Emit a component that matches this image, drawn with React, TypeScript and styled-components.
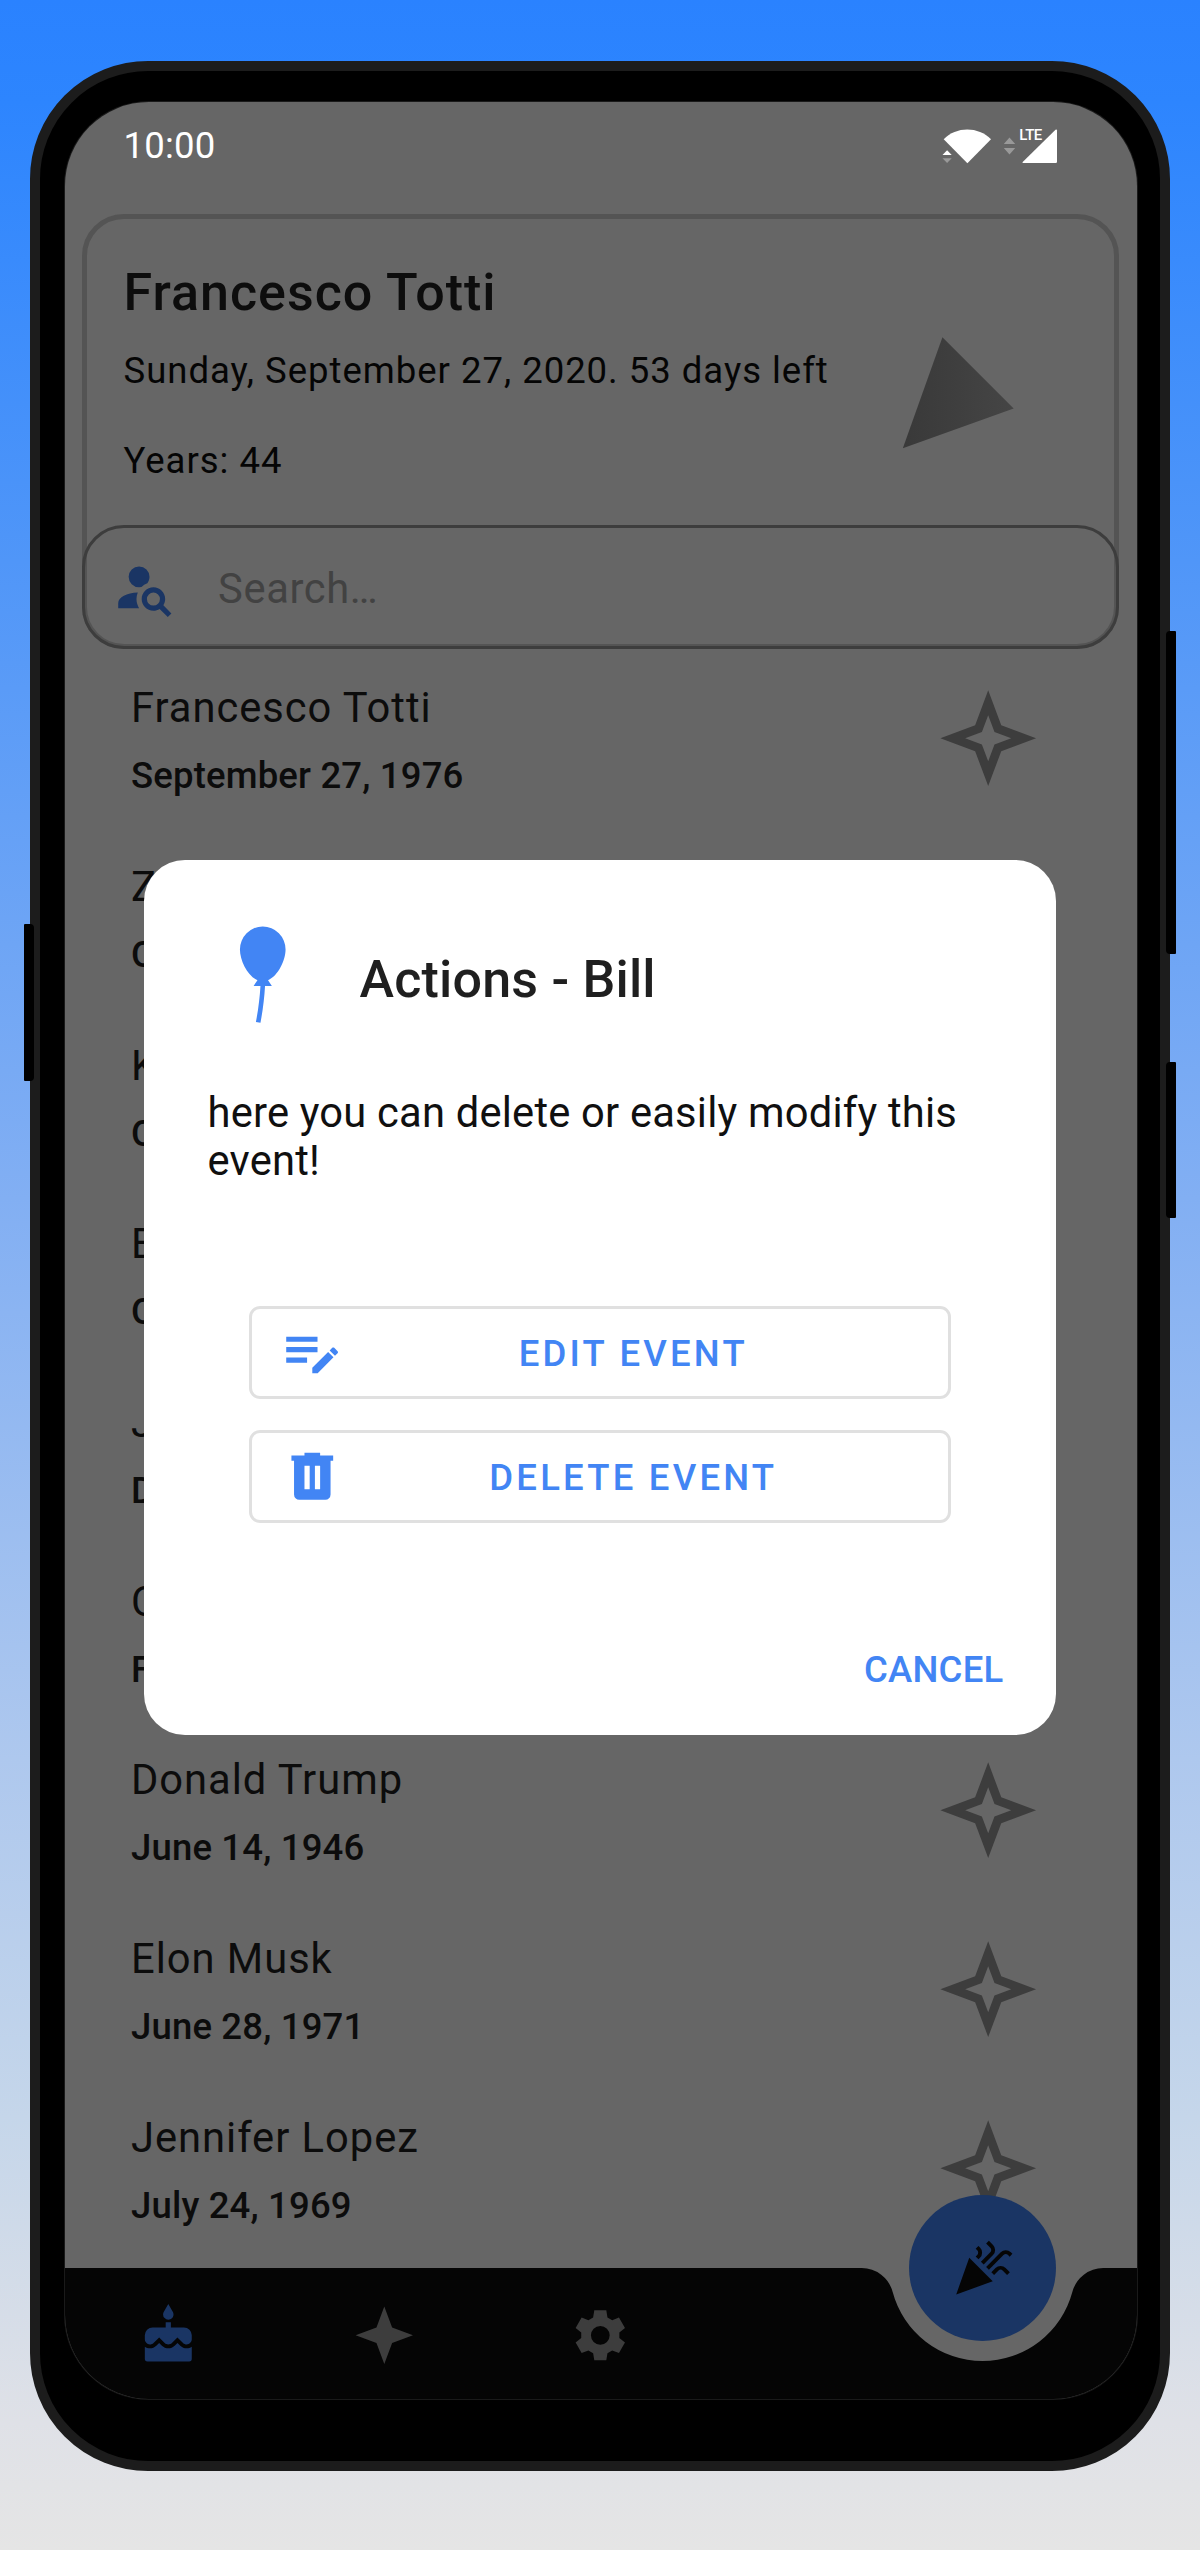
import React from "react";
import styled, { createGlobalStyle } from "styled-components";
import { MdCelebration } from "react-icons/md";

const GlobalStyle = createGlobalStyle`
  * { box-sizing: border-box; }
  body { margin: 0; }
`;

const Page = styled.main`
  width: 1200px;
  height: 2550px;
  padding: 61px 30px 0;
  overflow: hidden;
  font-family: Roboto, "Liberation Sans", sans-serif;
  background: linear-gradient(
    180deg,
    #2a82ff 0%,
    #2d85fe 4%,
    #5096f8 22%,
    #82aff3 47%,
    #aec8ee 69%,
    #c5d6ea 83%,
    #dfe1e7 95%,
    #e5e5e5 100%
  );
`;

const Phone = styled.div`
  position: relative;
  width: 1140px;
  height: 2410px;
  padding: 31px 22px 62px 25px;
  border: 10px solid #1c1c1c;
  border-radius: 118px;
  background: #000;
`;

const SideKey = styled.span<{ $side: "left" | "right"; $top: number; $length: number }>`
  position: absolute;
  top: ${(p) => p.$top}px;
  ${(p) => p.$side}: -16px;
  width: 10px;
  height: ${(p) => p.$length}px;
  border-radius: ${(p) => (p.$side === "left" ? "1px 4px 4px 1px" : "4px 1px 1px 4px")};
  background: #000;
`;

const Screen = styled.div`
  position: relative;
  display: flex;
  flex-direction: column;
  width: 1072px;
  height: 2297px;
  border-radius: 84px;
  overflow: hidden;
  background: #666;
  box-shadow: 0 0 0 1px #1a1a1a;
`;

const StatusBar = styled.header`
  display: flex;
  justify-content: space-between;
  flex: none;
  height: 112px;
  padding: 22px 77px 0 58.5px;

  svg { margin-top: -1px; }
`;

const Clock = styled.span`
  font-size: 36.5px;
  line-height: 44px;
  letter-spacing: 0.2px;
  color: #fff;
`;

const HeroCard = styled.section`
  flex: none;
  height: 435px;
  margin: 0 18px 0 16.5px;
  border: 5px solid #545454;
  border-radius: 42px;
`;

const HeroBody = styled.div`
  display: flex;
  justify-content: space-between;
  height: 306px;
  padding: 44px 37px 0 37px;
`;

const HeroTitle = styled.h1`
  margin: 0 0 26px;
  font-size: 52px;
  line-height: 60px;
  font-weight: 500;
  letter-spacing: 1px;
  color: #0d0d0d;
`;

const HeroLine = styled.p`
  margin: 0 0 46px;
  font-size: 36.5px;
  line-height: 44px;
  letter-spacing: 0.98px;
  white-space: nowrap;
  color: #050505;
`;

const HeroArt = styled.svg`
  flex: none;
  width: 190px;
  height: 190px;
  margin-top: 11px;
`;

const SearchField = styled.div`
  display: flex;
  align-items: center;
  gap: 42.5px;
  height: 124px;
  margin: 0 -5px;
  padding-left: 28.5px;
  border: 3px solid #3d3d3d;
  border-radius: 42px;
  color: #1a3564;
`;

const Placeholder = styled.span`
  padding-top: 3px;
  font-size: 41.7px;
  line-height: 50px;
  letter-spacing: 0.6px;
  color: #424242;
`;

const EventList = styled.ul`
  flex: 1;
  min-height: 0;
  margin: 0;
  padding: 0;
  overflow: hidden;
  list-style: none;
`;

const EventRow = styled.li`
  display: flex;
  justify-content: space-between;
  height: 178.65px;
  padding: 34.4px 97px 0 66px;
  color: #3d3d3d;

  svg { margin-top: 3px; }
`;

const EventName = styled.div`
  margin-bottom: 21px;
  font-size: 41.7px;
  line-height: 50px;
  letter-spacing: 0.97px;
  color: #0c0c0c;
`;

const EventDate = styled.div`
  font-size: 36.5px;
  line-height: 44px;
  font-weight: 500;
  letter-spacing: 0.17px;
  color: #0c0c0c;
`;

const NavBar = styled.nav`
  position: relative;
  display: flex;
  align-items: center;
  flex: none;
  gap: 153.4px;
  height: 131px;
  padding: 3px 0 0 71.8px;
`;

const NavShape = styled.svg`
  position: absolute;
  inset: 0;
  width: 1072px;
  height: 131px;
`;

const NavItem = styled.span<{ $active?: boolean }>`
  position: relative;
  display: flex;
  color: ${(p) => (p.$active ? "#1a3564" : "#3d3d3d")};
`;

const Fab = styled.button`
  position: absolute;
  top: -73px;
  left: 844px;
  display: flex;
  align-items: center;
  justify-content: center;
  width: 147px;
  height: 146px;
  padding: 0;
  border: 0;
  border-radius: 50%;
  background: #1a3564;
  color: #050505;
  font-size: 62.6px;
`;

const Overlay = styled.div`
  position: absolute;
  inset: 0;
  padding: 758px 81px 0 79px;
`;

const Dialog = styled.section`
  display: flex;
  flex-direction: column;
  height: 875px;
  padding: 62px 52.5px 0 63.5px;
  border-radius: 41px;
  background: #fff;
  color: #4285f4;
`;

const DialogHead = styled.div`
  display: flex;
  align-items: center;
  gap: 42.5px;
`;

const DialogTitle = styled.h2`
  margin: 7px 0 0;
  font-size: 52px;
  line-height: 60px;
  font-weight: 500;
  letter-spacing: 0.2px;
  color: #1f1f1f;
`;

const Message = styled.p`
  width: 790px;
  margin: 57px 0 120.5px;
  font-size: 41.7px;
  line-height: 48.6px;
  letter-spacing: 0.2px;
  color: #101010;
`;

const Actions = styled.div`
  display: flex;
  flex-direction: column;
  gap: 31px;
  width: 702px;
  margin-left: 41.5px;
`;

const ActionButton = styled.button`
  display: flex;
  align-items: center;
  height: 93px;
  padding: 0 25px 0 29px;
  border: 3px solid #e0e0e0;
  border-radius: 11px;
  background: #fff;
  color: #4285f4;
  font-family: inherit;
`;

const ActionLabel = styled.span`
  flex: 1;
  padding-top: 2px;
  font-size: 36.5px;
  line-height: 44px;
  font-weight: 500;
  letter-spacing: 3.2px;
  text-align: center;
`;

const CancelButton = styled.button`
  align-self: flex-end;
  margin-top: 124.5px;
  padding: 0;
  border: 0;
  background: none;
  color: #4285f4;
  font-family: inherit;
  font-size: 36.5px;
  line-height: 44px;
  font-weight: 500;
  letter-spacing: 0.25px;
`;

const paths = {
  accountSearch:
    "M15.5,12C18,12 20,14 20,16.5C20,17.38 19.75,18.21 19.31,18.9L22.39,22L21,23.39L17.88,20.32C17.19,20.75 16.37,21 15.5,21C13,21 11,19 11,16.5C11,14 13,12 15.5,12M15.5,14A2.5,2.5 0 0,0 13,16.5A2.5,2.5 0 0,0 15.5,19A2.5,2.5 0 0,0 18,16.5A2.5,2.5 0 0,0 15.5,14M10,4A4,4 0 0,1 14,8C14,8.91 13.69,9.75 13.18,10.43C12.32,10.75 11.55,11.26 10.91,11.9L10,12A4,4 0 0,1 6,8A4,4 0 0,1 10,4M2,20V18C2,15.88 5.31,14.14 9.5,14C9.18,14.78 9,15.62 9,16.5C9,17.79 9.38,19 10,20H2Z",
  starOutline:
    "M12,6.7L13.45,10.55L17.3,12L13.45,13.45L12,17.3L10.55,13.45L6.7,12L10.55,10.55L12,6.7M12,1L9,9L1,12L9,15L12,23L15,15L23,12L15,9L12,1Z",
  star: "M12,1L9,9L1,12L9,15L12,23L15,15L23,12L15,9L12,1Z",
  cake: "M12,6C13.11,6 14,5.1 14,4C14,3.62 13.9,3.27 13.71,2.97L12,0L10.29,2.97C10.1,3.27 10,3.62 10,4A2,2 0 0,0 12,6M16.6,16L15.53,14.92L14.45,16C13.15,17.29 10.87,17.3 9.56,16L8.5,14.92L7.4,16C6.75,16.64 5.88,17 4.96,17C4.23,17 3.56,16.77 3,16.39V21A1,1 0 0,0 4,22H20A1,1 0 0,0 21,21V16.39C20.44,16.77 19.77,17 19.04,17C18.12,17 17.25,16.64 16.6,16M18,9H13V7H11V9H6A3,3 0 0,0 3,12V13.54C3,14.62 3.88,15.5 4.96,15.5C5.5,15.5 6,15.3 6.34,14.93L8.5,12.8L10.61,14.93C11.35,15.67 12.64,15.67 13.38,14.93L15.5,12.8L17.65,14.93C18,15.3 18.5,15.5 19.03,15.5C20.11,15.5 21,14.62 21,13.54V12A3,3 0 0,0 18,9Z",
  gear: "M9.7,2.4H14.3L14.75,5.15L16.56,6.19L19.16,5.2L21.46,9.2L19.31,10.96V13.04L21.46,14.8L19.16,18.8L16.56,17.81L14.75,18.85L14.3,21.6H9.7L9.25,18.85L7.44,17.81L4.84,18.8L2.54,14.8L4.69,13.04V10.96L2.54,9.2L4.84,5.2L7.44,6.19L9.25,5.15ZM12,8.4A3.6,3.6 0 0,0 8.4,12A3.6,3.6 0 0,0 12,15.6A3.6,3.6 0 0,0 15.6,12A3.6,3.6 0 0,0 12,8.4Z",
  balloon:
    "M13.16,12.74L14,14H12.5C12.35,16.71 12,19.41 11.5,22.08L10.5,21.92C11,19.3 11.34,16.66 11.5,14H10L10.84,12.74C8.64,11.79 7,8.36 7,6A5,5 0 0,1 12,1A5,5 0 0,1 17,6C17,8.36 15.36,11.79 13.16,12.74Z",
  listEdit:
    "M2,6V8H14V6H2M2,10V12H14V10H2M20.04,10.13C19.9,10.13 19.76,10.19 19.65,10.3L18.65,11.3L20.7,13.35L21.7,12.35C21.92,12.14 21.92,11.79 21.7,11.58L20.42,10.3C20.31,10.19 20.18,10.13 20.04,10.13M18.07,11.88L12,17.94V20H14.06L20.12,13.93L18.07,11.88M2,14V16H10V14H2Z",
  trash:
    "M9,3V4H4V6H5V19A2,2 0 0,0 7,21H17A2,2 0 0,0 19,19V6H20V4H15V3H9M9,8H11V17H9V8M13,8H15V17H13V8Z",
};

const IconSvg = styled.svg<{ $size: number }>`
  flex: none;
  width: ${(p) => p.$size}px;
  height: ${(p) => p.$size}px;
  fill: currentColor;
`;

function Icon({ name, size = 62.6 }: { name: keyof typeof paths; size?: number }) {
  return (
    <IconSvg $size={size} viewBox="0 0 24 24" aria-hidden="true">
      <path d={paths[name]} />
    </IconSvg>
  );
}

function StatusIcons() {
  return (
    <svg width="120" height="44" viewBox="0 0 120 44" fill="#fff" aria-hidden="true">
      <path d="M3.7 16.3C16 3.2 38.5 3.2 51 16.3L27.4 40.3Z" />
      <path d="M2.5 32L7.1 27.3L11.7 32Z" />
      <path d="M2.5 35.2H11.7L7.1 40Z" fill="#999" />
      <path d="M63.8 21L69.5 14.6L75.2 21ZM63.8 25H75.2L69.5 31.4Z" fill="#999" />
      <path d="M117 7.5V38.8Q117 40 115.8 40H83Q82 40 82.7 39L115.5 6.7Q117 5.8 117 7.5Z" />
      <text x="79.3" y="17.2" fontSize="15" fontWeight="500" textLength="23">LTE</text>
    </svg>
  );
}

const events = [
  ["Francesco Totti", "September 27, 1976"],
  ["Zlatan Ibrahimovic", "October 3, 1981"],
  ["Kim Kardashian", "October 21, 1980"],
  ["Bill Gates", "October 28, 1955"],
  ["Jay-Z", "December 4, 1969"],
  ["Cristiano Ronaldo", "February 5, 1985"],
  ["Donald Trump", "June 14, 1946"],
  ["Elon Musk", "June 28, 1971"],
  ["Jennifer Lopez", "July 24, 1969"],
];

export default function App() {
  return (
    <>
      <GlobalStyle />
      <Page>
        <Phone>
          <SideKey $side="left" $top={853} $length={157} />
          <SideKey $side="right" $top={560} $length={323} />
          <SideKey $side="right" $top={991} $length={156} />
          <Screen>
            <StatusBar>
              <Clock>10:00</Clock>
              <StatusIcons />
            </StatusBar>

            <HeroCard>
              <HeroBody>
                <div>
                  <HeroTitle>Francesco Totti</HeroTitle>
                  <HeroLine>Sunday, September 27, 2020. 53 days left</HeroLine>
                  <HeroLine>Years: 44</HeroLine>
                </div>
                <HeroArt viewBox="0 0 24 24" aria-hidden="true">
                  <defs>
                    <linearGradient id="cone">
                      <stop offset="0" stopColor="#393939" />
                      <stop offset="1" stopColor="#454545" />
                    </linearGradient>
                  </defs>
                  <path d="M2 22l14-5-9-9z" fill="url(#cone)" />
                </HeroArt>
              </HeroBody>
              <SearchField>
                <Icon name="accountSearch" />
                <Placeholder>Search…</Placeholder>
              </SearchField>
            </HeroCard>

            <EventList>
              {events.map(([name, date]) => (
                <EventRow key={name}>
                  <div>
                    <EventName>{name}</EventName>
                    <EventDate>{date}</EventDate>
                  </div>
                  <Icon name="starOutline" size={104.4} />
                </EventRow>
              ))}
            </EventList>

            <NavBar>
              <NavShape viewBox="1 0 1072 131" aria-hidden="true">
                <path
                  fill="#050505"
                  d="M0 0H797.7A32 32 0 0 1 828.6 23.8A93 93 0 0 0 1008.4 23.8A32 32 0 0 1 1039.3 0H1074V131H0Z"
                />
              </NavShape>
              <NavItem $active>
                <Icon name="cake" />
              </NavItem>
              <NavItem>
                <Icon name="star" />
              </NavItem>
              <NavItem>
                <Icon name="gear" />
              </NavItem>
              <Fab aria-label="Add event">
                <MdCelebration />
              </Fab>
            </NavBar>

            <Overlay>
              <Dialog role="dialog">
                <DialogHead>
                  <Icon name="balloon" size={109.5} />
                  <DialogTitle>Actions - Bill</DialogTitle>
                </DialogHead>
                <Message>here you can delete or easily modify this event!</Message>
                <Actions>
                  <ActionButton>
                    <Icon name="listEdit" />
                    <ActionLabel>EDIT EVENT</ActionLabel>
                  </ActionButton>
                  <ActionButton>
                    <Icon name="trash" />
                    <ActionLabel>DELETE EVENT</ActionLabel>
                  </ActionButton>
                </Actions>
                <CancelButton>CANCEL</CancelButton>
              </Dialog>
            </Overlay>
          </Screen>
        </Phone>
      </Page>
    </>
  );
}
